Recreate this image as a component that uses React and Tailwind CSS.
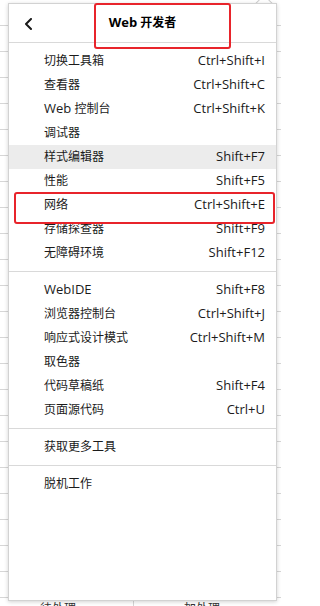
import React from "react";

const L = ({ children }) => <span className="text-[13px]">{children}</span>;

const groups = [
  [
    ["切换工具箱", "Ctrl+Shift+I"],
    ["查看器", "Ctrl+Shift+C"],
    [<><L>Web</L> 控制台</>, "Ctrl+Shift+K"],
    ["调试器", ""],
    ["样式编辑器", "Shift+F7", true],
    ["性能", "Shift+F5"],
    ["网络", "Ctrl+Shift+E"],
    ["存储探查器", "Shift+F9"],
    ["无障碍环境", "Shift+F12"],
  ],
  [
    [<L>WebIDE</L>, "Shift+F8"],
    ["浏览器控制台", "Ctrl+Shift+J"],
    ["响应式设计模式", "Ctrl+Shift+M"],
    ["取色器", ""],
    ["代码草稿纸", "Shift+F4"],
    ["页面源代码", "Ctrl+U"],
  ],
  [["获取更多工具", ""]],
  [["脱机工作", ""]],
];

function Row({ label, shortcut, hl }) {
  return (
    <div
      className={`h-[24px] flex items-center justify-between pl-[35px] pr-[11px] text-[12px] text-[#1b1b1b] ${
        hl ? "bg-[#ececec]" : ""
      }`}
    >
      <span>{label}</span>
      {shortcut ? <span className="text-[13px]">{shortcut}</span> : null}
    </div>
  );
}

export default function App() {
  return (
    <div
      className="relative w-[281px] h-[606px] overflow-hidden bg-white"
      style={{ fontFamily: '"Open Sans", "Noto Sans CJK SC", sans-serif' }}
    >
      {/* background spreadsheet */}
      <div className="flex flex-col">
        {Array.from({ length: 23 }).map((_, i) => (
          <div key={i} className="h-[26px] border-b border-[#d6d6d6] shrink-0" />
        ))}
        <div className="flex h-[20px] text-[12px] text-[#333]">
          <div className="w-[134px] border-r border-[#d6d6d6] pl-[40px] pt-[2px]">待处理</div>
          <div className="pl-[50px] pt-[2px]">加处理</div>
        </div>
      </div>

      {/* panel arrow */}
      <div className="absolute left-[258px] top-[-3px] w-[12px] h-[12px] rotate-45 bg-white border-l border-t border-[#cfcfcf]" />

      {/* panel */}
      <div className="absolute left-[8px] top-[3px] w-[269px] h-[598px] bg-white border border-[#d2d2d2] shadow-[0_1px_4px_rgba(0,0,0,0.18)] flex flex-col">
        <div className="h-[38px] shrink-0 relative flex items-center justify-center">
          <svg
            className="absolute left-[15px] top-[14px]"
            width="9"
            height="12"
            viewBox="0 0 9 12"
            fill="none"
          >
            <polyline points="7,1 2,6 7,11" stroke="#1a1a1a" strokeWidth="2" strokeLinecap="round" strokeLinejoin="round" />
          </svg>
          <div className="font-bold text-[12px] text-black">
            <span className="text-[13px]">Web</span> 开发者
          </div>
        </div>
        <div className="h-px bg-[#d9d9d9] shrink-0" />
        <div className="pt-[6px] flex flex-col">
          {groups.map((g, gi) => (
            <React.Fragment key={gi}>
              {gi > 0 && <div className="h-px bg-[#d9d9d9] my-[6px]" />}
              {g.map(([label, sc, hl], i) => (
                <Row key={i} label={label} shortcut={sc} hl={hl} />
              ))}
            </React.Fragment>
          ))}
        </div>
      </div>

      {/* red annotation boxes */}
      <div className="absolute left-[94px] top-[3px] w-[137px] h-[46px] border-2 border-[#e8242b] rounded-[3px]" />
      <div className="absolute left-[14px] top-[192px] w-[261px] h-[32px] border-2 border-[#e8242b] rounded-[3px]" />
    </div>
  );
}
